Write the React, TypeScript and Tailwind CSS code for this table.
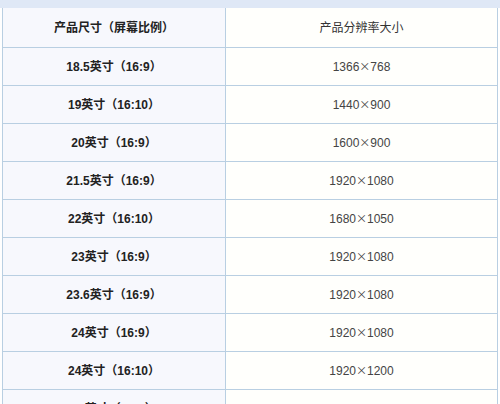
import React from "react";

const rows: [string, string][] = [
  ["18.5英寸（16:9）", "1366×768"],
  ["19英寸（16:10）", "1440×900"],
  ["20英寸（16:9）", "1600×900"],
  ["21.5英寸（16:9）", "1920×1080"],
  ["22英寸（16:10）", "1680×1050"],
  ["23英寸（16:9）", "1920×1080"],
  ["23.6英寸（16:9）", "1920×1080"],
  ["24英寸（16:9）", "1920×1080"],
  ["24英寸（16:10）", "1920×1200"],
  ["27英寸（16:9）", "1920×1080"],
];

const font = { fontFamily: '"Liberation Sans", "Noto Sans CJK SC", sans-serif' };

// the multiplication sign in the reference is a full width CJK glyph
const Res = ({ value }: { value: string }) => {
  const [w, h] = value.split("×");
  return (
    <>
      {w}
      <span className="font-['Noto_Sans_CJK_SC'] text-[11px]">×</span>
      {h}
    </>
  );
};

const App = () => {
  return (
    <div className="w-[500px] h-[404px] overflow-hidden bg-white" style={font}>
      <div className="h-[8px] bg-[#dfe8f6]" />
      <div className="ml-[2px] w-[496px] border-l border-r border-[#b9cfe2]">
        <div className="flex h-[40px] border-b border-[#b9cfe2]">
          <div className="w-[223px] flex items-center justify-center bg-[#f7f8fd] border-r border-[#b9cfe2] text-[12px] font-bold text-[#222]">
            产品尺寸（屏幕比例）
          </div>
          <div className="flex-1 flex items-center justify-center bg-[#fffffc] text-[12px] text-[#333]">
            产品分辨率大小
          </div>
        </div>
        {rows.map(([size, res], i) => (
          <div key={i} className="flex h-[38px] border-b border-[#b9cfe2]">
            <div className="w-[223px] flex items-center justify-center bg-[#f7f8fd] border-r border-[#b9cfe2] text-[12px] font-bold text-[#222]">
              {size}
            </div>
            <div className="flex-1 flex items-center justify-center bg-[#fffffc] text-[12px] text-[#444]">
              <Res value={res} />
            </div>
          </div>
        ))}
      </div>
    </div>
  );
};

export default App;
